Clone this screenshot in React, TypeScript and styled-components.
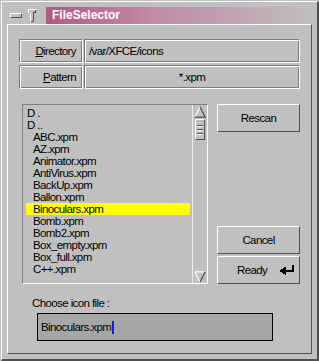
import React from "react";
import styled, { createGlobalStyle } from "styled-components";

const GlobalStyle = createGlobalStyle`
  html, body { margin: 0; padding: 0; background: #c0c0c0; }
  body {
    font-family: "Liberation Sans", Arial, sans-serif;
    font-size: 11.5px;
    letter-spacing: -0.6px;
    color: #000;
  }
  * { box-sizing: border-box; }
`;

const DARK = "#505050";

const Window = styled.div`
  width: 319px;
  height: 361px;
  background: #c0c0c0;
  padding: 1px 0 0 1px;
`;

const Frame = styled.div`
  height: 100%;
  border-top: 1px solid #fff;
  border-left: 1px solid #fff;
  border-right: 2px solid ${DARK};
  border-bottom: 2px solid ${DARK};
  display: flex;
  flex-direction: column;
`;

const TitleRow = styled.div`
  height: 22px;
  display: flex;
  align-items: flex-start;
`;

const IconArea = styled.div`
  width: 44px;
  height: 17px;
  margin-top: 5px;
  display: flex;
  align-items: center;
  padding-left: 8px;
  gap: 6px;
`;

const MinButton = styled.div`
  width: 12px;
  height: 5px;
  border-top: 1px solid #fff;
  border-left: 1px solid #fff;
  border-right: 1px solid ${DARK};
  border-bottom: 1px solid ${DARK};
`;

const TitleBar = styled.div`
  width: 266px;
  height: 17px;
  margin-top: 5px;
  background: linear-gradient(to right, #b65686 0%, #c08aa6 40%, #c0bcc0 100%);
  color: #fff;
  font-family: "Liberation Sans", Arial, sans-serif;
  font-weight: bold;
  font-size: 12px;
  letter-spacing: 0;
  line-height: 17px;
  padding-left: 6px;
`;

const Panel = styled.div`
  flex: 1;
  margin: 0 5px 5px 5px;
  border-top: 1px solid #fff;
  border-left: 1px solid #fff;
  border-right: 1px solid ${DARK};
  border-bottom: 1px solid ${DARK};
  padding: 14px 11px 0 11px;
  display: flex;
  flex-direction: column;
`;

const FieldRow = styled.div<{ $top?: number }>`
  display: flex;
  gap: 1px;
  height: 24px;
  margin-top: ${(p) => p.$top ?? 0}px;
`;

const groove = `
  border: 1px solid;
  border-color: #7a7a7a #fff #fff #7a7a7a;
  box-shadow: inset 1px 1px 0 #fff, inset -1px -1px 0 #7a7a7a;
`;

const LabelButton = styled.div`
  ${groove}
  width: 64px;
  display: flex;
  align-items: center;
  justify-content: flex-end;
  padding-right: 6px;
  span {
    text-decoration: underline;
    text-underline-offset: 1px;
  }
`;

const FieldBox = styled.div<{ $center?: boolean }>`
  ${groove}
  flex: 1;
  display: flex;
  align-items: center;
  justify-content: ${(p) => (p.$center ? "center" : "flex-start")};
  padding-left: ${(p) => (p.$center ? 0 : 4)}px;
`;

const Middle = styled.div`
  display: flex;
  margin-top: 15px;
  margin-left: 3px;
  gap: 9px;
`;

const ListBox = styled.div`
  width: 186px;
  height: 180px;
  border-top: 1px solid #808080;
  border-left: 1px solid #808080;
  border-bottom: 1px solid #fff;
  border-right: 1px solid #fff;
  display: flex;
`;

const Items = styled.div`
  flex: 1;
  padding-top: 2px;
  overflow: hidden;
`;

const Item = styled.div<{ $dir?: boolean; $selected?: boolean }>`
  height: 12px;
  line-height: 12px;
  margin: 0 2px 0 3px;
  padding-left: ${(p) => (p.$dir ? 1 : 7)}px;
  background: ${(p) => (p.$selected ? "#ffff00" : "transparent")};
  white-space: nowrap;
`;

const Scrollbar = styled.div`
  width: 15px;
  border-left: 1px solid #ececec;
  display: flex;
  flex-direction: column;
  align-items: center;
  padding: 1px 0 0 0;
`;

const Thumb = styled.div`
  width: 10px;
  height: 21px;
  margin-top: 1px;
  border-top: 1px solid #fff;
  border-left: 1px solid #fff;
  border-right: 1px solid ${DARK};
  border-bottom: 1px solid ${DARK};
  display: flex;
  flex-direction: column;
  align-items: center;
  padding-top: 5px;
  gap: 2px;
`;

const Groove = styled.div`
  width: 6px;
  height: 2px;
  border-top: 1px solid ${DARK};
  border-bottom: 1px solid #fff;
`;

const Spacer = styled.div`
  flex: 1;
`;

const ButtonColumn = styled.div`
  width: 83px;
  display: flex;
  flex-direction: column;
  gap: 2px;
`;

const Button = styled.div<{ $spread?: boolean }>`
  height: 28px;
  border-top: 1px solid #fff;
  border-left: 1px solid #fff;
  border-right: 1px solid ${DARK};
  border-bottom: 1px solid ${DARK};
  display: flex;
  align-items: center;
  justify-content: ${(p) => (p.$spread ? "space-between" : "center")};
  padding: ${(p) => (p.$spread ? "0 4px 0 19px" : "0")};
`;

const ChooseLabel = styled.div`
  margin-top: 12px;
  margin-left: 13px;
  line-height: 14px;
  height: 14px;
`;

const Input = styled.div`
  margin-top: 3px;
  margin-left: 18px;
  width: 236px;
  height: 28px;
  border: 1px solid #000;
  background: #a6a6a6;
  display: flex;
  align-items: center;
  padding-left: 3px;
`;

const Caret = styled.span`
  display: inline-block;
  width: 2px;
  height: 13px;
  background: #1a1ae6;
  margin-left: 1px;
`;

const Pin = () => (
  <svg width="8" height="13" viewBox="0 0 8 13" shapeRendering="crispEdges">
    <path d="M0.5 3.5 V0.5 H7.5" stroke="#fff" fill="none" />
    <path d="M2.5 4 V12.5" stroke="#fff" fill="none" />
    <path d="M7.5 0.5 V3.5 H5.5 V12.5 H2.5" stroke={DARK} fill="none" />
  </svg>
);

const UpArrow = () => (
  <svg width="12" height="12" viewBox="0 0 12 12">
    <path d="M6 0.8 L0.8 11.2" stroke="#fff" strokeWidth="1.2" fill="none" />
    <path d="M6 0.8 L11.2 11.2 H0.8" stroke={DARK} strokeWidth="1.2" fill="none" />
  </svg>
);

const DownArrow = () => (
  <svg width="12" height="12" viewBox="0 0 12 12">
    <path d="M0.8 0.8 H11.2 M0.8 0.8 L6 11.2" stroke="#fff" strokeWidth="1.2" fill="none" />
    <path d="M11.2 0.8 L6 11.2" stroke={DARK} strokeWidth="1.2" fill="none" />
  </svg>
);

const EnterIcon = () => (
  <svg width="16" height="10" viewBox="0 0 16 10" shapeRendering="crispEdges">
    <polygon points="0,6 7,1.5 7,10" fill="#000" />
    <rect x="6" y="5" width="9" height="2" fill="#000" />
    <rect x="13" y="0" width="2" height="7" fill="#000" />
  </svg>
);

const files = [
  "ABC.xpm",
  "AZ.xpm",
  "Animator.xpm",
  "AntiVirus.xpm",
  "BackUp.xpm",
  "Ballon.xpm",
  "Binoculars.xpm",
  "Bomb.xpm",
  "Bomb2.xpm",
  "Box_empty.xpm",
  "Box_full.xpm",
  "C++.xpm",
];

export default function App() {
  return (
    <>
      <GlobalStyle />
      <Window>
        <Frame>
          <TitleRow>
            <IconArea>
              <MinButton />
              <Pin />
            </IconArea>
            <TitleBar>FileSelector</TitleBar>
          </TitleRow>
          <Panel>
            <FieldRow>
              <LabelButton>
                <span>D</span>irectory
              </LabelButton>
              <FieldBox>/var/XFCE/icons</FieldBox>
            </FieldRow>
            <FieldRow $top={2}>
              <LabelButton>
                <span>P</span>attern
              </LabelButton>
              <FieldBox $center>*.xpm</FieldBox>
            </FieldRow>
            <Middle>
              <ListBox>
                <Items>
                  <Item $dir>D .</Item>
                  <Item $dir>D ..</Item>
                  {files.map((f) => (
                    <Item key={f} $selected={f === "Binoculars.xpm"}>
                      {f}
                    </Item>
                  ))}
                </Items>
                <Scrollbar>
                  <UpArrow />
                  <Thumb>
                    <Groove />
                    <Groove />
                    <Groove />
                  </Thumb>
                  <Spacer />
                  <DownArrow />
                </Scrollbar>
              </ListBox>
              <ButtonColumn>
                <Button>Rescan</Button>
                <Spacer />
                <Button>Cancel</Button>
                <Button $spread>
                  Ready
                  <EnterIcon />
                </Button>
              </ButtonColumn>
            </Middle>
            <ChooseLabel>Choose icon file :</ChooseLabel>
            <Input>
              Binoculars.xpm
              <Caret />
            </Input>
          </Panel>
        </Frame>
      </Window>
    </>
  );
}
